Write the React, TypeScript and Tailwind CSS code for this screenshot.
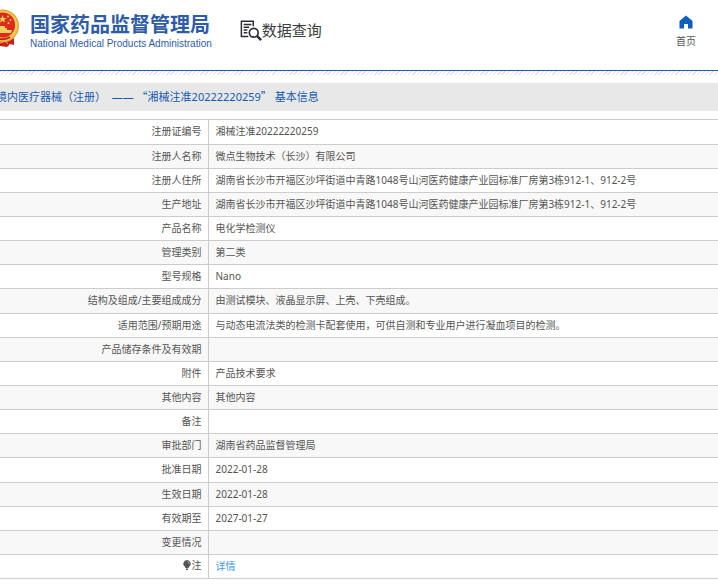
interface InfoRow {
  label: string;
  value?: string;
  link?: boolean;
  icon?: boolean;
}

const ADDRESS = '湖南省长沙市开福区沙坪街道中青路1048号山河医药健康产业园标准厂房第3栋912-1、912-2号';

const rows: InfoRow[] = [
  { label: '注册证编号', value: '湘械注准20222220259' },
  { label: '注册人名称', value: '微点生物技术（长沙）有限公司' },
  { label: '注册人住所', value: ADDRESS },
  { label: '生产地址', value: ADDRESS },
  { label: '产品名称', value: '电化学检测仪' },
  { label: '管理类别', value: '第二类' },
  { label: '型号规格', value: 'Nano' },
  { label: '结构及组成/主要组成成分', value: '由测试模块、液晶显示屏、上壳、下壳组成。' },
  { label: '适用范围/预期用途', value: '与动态电流法类的检测卡配套使用，可供自测和专业用户进行凝血项目的检测。' },
  { label: '产品储存条件及有效期' },
  { label: '附件', value: '产品技术要求' },
  { label: '其他内容', value: '其他内容' },
  { label: '备注' },
  { label: '审批部门', value: '湖南省药品监督管理局' },
  { label: '批准日期', value: '2022-01-28' },
  { label: '生效日期', value: '2022-01-28' },
  { label: '有效期至', value: '2027-01-27' },
  { label: '变更情况' },
  { label: '注', value: '详情', link: true, icon: true },
];

function Emblem() {
  return (
    <svg viewBox="0 0 20 40" className="h-10 w-5 shrink-0" aria-hidden="true">
      <path d="M0 28 L12 27 L14 31 L14 37 L10 36 L7 39 L0 38 Z" fill="#c8201c" />
      <circle cx="2.5" cy="18" r="16.5" fill="#e2a12e" />
      <circle cx="2.5" cy="18" r="15.2" fill="#f3c95a" />
      <circle cx="2.5" cy="17" r="12.6" fill="#dd2a1b" />
      <path d="M2.5 7 L3.6 10 L6.5 10 L4.2 11.8 L5 14.6 L2.5 13 L0 14.6 L0.8 11.8 L0 10 L1.5 10 Z" fill="#f9d65c" />
      <circle cx="8" cy="8.5" r="1" fill="#f9d65c" />
      <circle cx="10.5" cy="12" r="1" fill="#f9d65c" />
      <circle cx="8.5" cy="15" r="1" fill="#f9d65c" />
      <path d="M0 18 H5 V20 H7 V22 H12 L11 25 H0 Z" fill="#f6cf5e" />
      <path d="M0 31 Q6 32 10 29" fill="none" stroke="#c8201c" strokeWidth="2" />
      <path d="M0 35 L5 33 L8 36" fill="none" stroke="#eda33a" strokeWidth="1" />
    </svg>
  );
}

function SearchDocIcon() {
  return (
    <svg viewBox="0 0 24 24" className="h-6 w-[22px] shrink-0" fill="none" stroke="#2c2c34" aria-hidden="true">
      <path d="M9 19 H1.5 V2.5 H14.5 V8" strokeWidth="1.6" />
      <path d="M4 6 H12.5 M4 9 H10 M4 12 H8 M4 15 H8" strokeWidth="1.4" />
      <circle cx="15" cy="15" r="4.8" strokeWidth="1.8" />
      <path d="M18.5 18.5 L23 23" strokeWidth="2.8" />
    </svg>
  );
}

function HomeIcon() {
  return (
    <svg viewBox="0 0 14 14" className="h-3.5 w-3.5" fill="#0b5fc0" aria-hidden="true">
      <path d="M7 0.5 L13.5 6 V13.5 H9 V9 H5 V13.5 H0.5 V6 Z" />
    </svg>
  );
}

function BulbIcon() {
  return (
    <svg viewBox="0 0 9 10" className="h-2.5 w-[9px] shrink-0" aria-hidden="true">
      <path d="M4 0 A3.7 3.7 0 0 1 6 6.8 L5.5 8 H2.5 L2 6.8 A3.7 3.7 0 0 1 4 0 Z" fill="#555" />
      <path d="M3 8.5 H5 V10 H3 Z" fill="#555" />
      <path d="M4.5 1.5 Q6 2 6.2 3.5" fill="none" stroke="#ddd" strokeWidth="0.8" />
    </svg>
  );
}

export default function App() {
  return (
    <div className="overflow-hidden bg-white font-['Noto_Sans','Noto_Sans_CJK_SC',sans-serif] text-[#555]">
      <header className="flex h-[71px] items-start border-b border-[#1f56a8] pr-[22px]">
        <div className="flex items-start pt-2">
          <Emblem />
          <div className="pt-1 pl-2.5 text-[#2f5ca8]">
            <h1 className="text-[20px] leading-[26px] font-bold whitespace-nowrap">国家药品监督管理局</h1>
            <p className="font-['Liberation_Sans',sans-serif] text-[10px] leading-3 whitespace-nowrap">
              National Medical Products Administration
            </p>
          </div>
        </div>
        <div className="flex items-center pt-[18px] pl-7 text-[#3c3c44]">
          <SearchDocIcon />
          <h2 className="text-[15px] leading-6 whitespace-nowrap">数据查询</h2>
        </div>
        <a href="#" className="ml-auto flex flex-col items-center gap-1 pt-[15px]">
          <HomeIcon />
          <span className="text-[10px] leading-4">首页</span>
        </a>
      </header>
      <div className="h-1 bg-[repeating-linear-gradient(135deg,#dfe3ee_0px,#dfe3ee_1px,#ffffff_1px,#ffffff_3px)]" />

      <main className="pt-2">
        <div className="flex h-7 items-center bg-[#e8e8e8]">
          <h3 className="-ml-1 text-[11px] whitespace-nowrap text-[#1559b0]">
            境内医疗器械（注册）&nbsp; ——&nbsp;
            <span className="font-['Noto_Sans_CJK_SC',sans-serif]">“</span>
            湘械注准20222220259
            <span className="font-['Noto_Sans_CJK_SC',sans-serif]">”</span> 基本信息
          </h3>
        </div>
        <table className="mt-2 w-full border-collapse border-y border-[#ccc] text-[10px] leading-4">
          <tbody>
            {rows.map((row) => (
              <tr key={row.label} className="h-6 border-b border-[#ccc] even:bg-[#f8f8f8] [&:nth-child(7n+1)]:h-[25px]">
                <th scope="row" className="w-[208px] border-r border-[#ccc] pr-1.5 pb-0.5 text-right font-normal">
                  {row.icon ? (
                    <span className="inline-flex items-center">
                      <BulbIcon />
                      {row.label}
                    </span>
                  ) : (
                    row.label
                  )}
                </th>
                <td className="pb-0.5 pl-[7px]">
                  {row.link ? (
                    <a href="#" className="text-[#3e97ee]">{row.value}</a>
                  ) : (
                    row.value
                  )}
                </td>
              </tr>
            ))}
          </tbody>
        </table>
      </main>
    </div>
  );
}
